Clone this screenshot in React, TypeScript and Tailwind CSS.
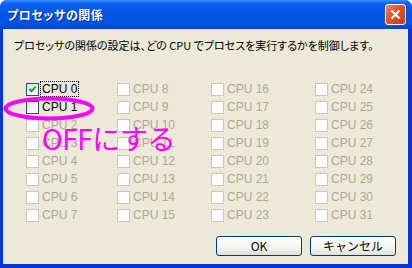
import React from "react";

const font = "font-['Noto_Sans_CJK_JP','Noto_Sans',sans-serif]";

function Box({ checked, enabled }: { checked?: boolean; enabled?: boolean }) {
  return (
    <div
      className={
        "relative w-[13px] h-[13px] shrink-0 border " +
        (enabled
          ? "border-[#1C5180] bg-[linear-gradient(135deg,#DCDBD5_0%,#F8F8F6_60%,#FFFFFF_100%)]"
          : "border-[#CAC8BB] bg-white")
      }
    >
      {checked && (
        <svg width="11" height="11" viewBox="0 0 11 11" className="absolute left-0 top-0">
          <path d="M2.5 5 L4.5 7.2 L8.8 2.6" stroke="#21A121" strokeWidth="2" fill="none" />
        </svg>
      )}
    </div>
  );
}

function Cpu({ n }: { n: number }) {
  const enabled = n < 2;
  return (
    <div className="h-[18px] flex items-center">
      <Box checked={n === 0} enabled={enabled} />
      <span
        className={
          "ml-[2px] px-[1px] text-[12px] leading-[14px] font-['Liberation_Sans',sans-serif] " +
          (enabled ? "text-black" : "text-[#ACA899]") +
          (n === 0 ? " outline outline-1 outline-dotted outline-black" : "")
        }
      >
        CPU {n}
      </span>
    </div>
  );
}

function Col({ start, w }: { start: number; w: string }) {
  return (
    <div className={"flex flex-col " + w}>
      {Array.from({ length: 8 }, (_, i) => (
        <Cpu key={i} n={start + i} />
      ))}
    </div>
  );
}

function Btn({ children }: { children: React.ReactNode }) {
  return (
    <div className="w-[86px] h-[20px] rounded-[3px] border border-[#003C74] bg-[linear-gradient(to_bottom,#FFFFFF_0%,#F4F3EE_60%,#E3E1D6_100%)] flex items-center justify-center text-[12px] text-black">
      {children}
    </div>
  );
}

export default function App() {
  return (
    <div className={"relative w-[412px] h-[268px] flex flex-col bg-[#0836D6] rounded-t-[7px] overflow-hidden " + font}>
      <div className="h-[29px] shrink-0 flex items-center pl-[7px] pr-[6px] bg-[linear-gradient(to_bottom,#3D8FFF_0%,#0A62F2_12%,#0055E5_45%,#0054E3_80%,#0046D0_100%)]">
        <span className="text-white font-bold text-[12px] [font-feature-settings:'palt'] [text-shadow:1px_1px_#0A2A9A] tracking-[0.5px]">
          プロセッサの関係
        </span>
        <div className="ml-auto w-[21px] h-[21px] rounded-[3px] border border-white bg-[linear-gradient(135deg,#F08A6A_0%,#E0552F_40%,#C43D1A_100%)] flex items-center justify-center">
          <svg width="11" height="11" viewBox="0 0 11 11">
            <path d="M1.5 1.5 L9.5 9.5 M9.5 1.5 L1.5 9.5" stroke="white" strokeWidth="2.2" />
          </svg>
        </div>
      </div>
      <div className="flex-1 ml-[3px] mr-[4px] mb-[4px] bg-[#ECE9D8] flex flex-col">
        <div className="pt-[9px] pl-[11px] text-[11px] leading-[14px] text-black [font-feature-settings:'palt']">
          プロセッサの関係の設定は、どの CPU でプロセスを実行するかを制御します。
        </div>
        <div className="flex pl-[23px] mt-[28px]">
          <Col start={0} w="w-[91px]" />
          <Col start={8} w="w-[94px]" />
          <Col start={16} w="w-[104px]" />
          <Col start={24} w="w-[80px]" />
        </div>
        <div className="mt-auto flex justify-end gap-[8px] pr-[12px] pb-[8px]">
          <Btn>OK</Btn>
          <Btn>キャンセル</Btn>
        </div>
      </div>
      <svg className="absolute left-[3px] top-[96px]" width="92" height="25" viewBox="0 0 92 25">
        <ellipse cx="46" cy="12.5" rx="43.5" ry="10" stroke="#FF00FF" strokeWidth="4" fill="none" />
      </svg>
      <div className="absolute left-[42px] top-[118px] text-[28px] leading-[40px] text-[#FF00FF] tracking-[-0.5px]">
        OFFにする
      </div>
    </div>
  );
}
